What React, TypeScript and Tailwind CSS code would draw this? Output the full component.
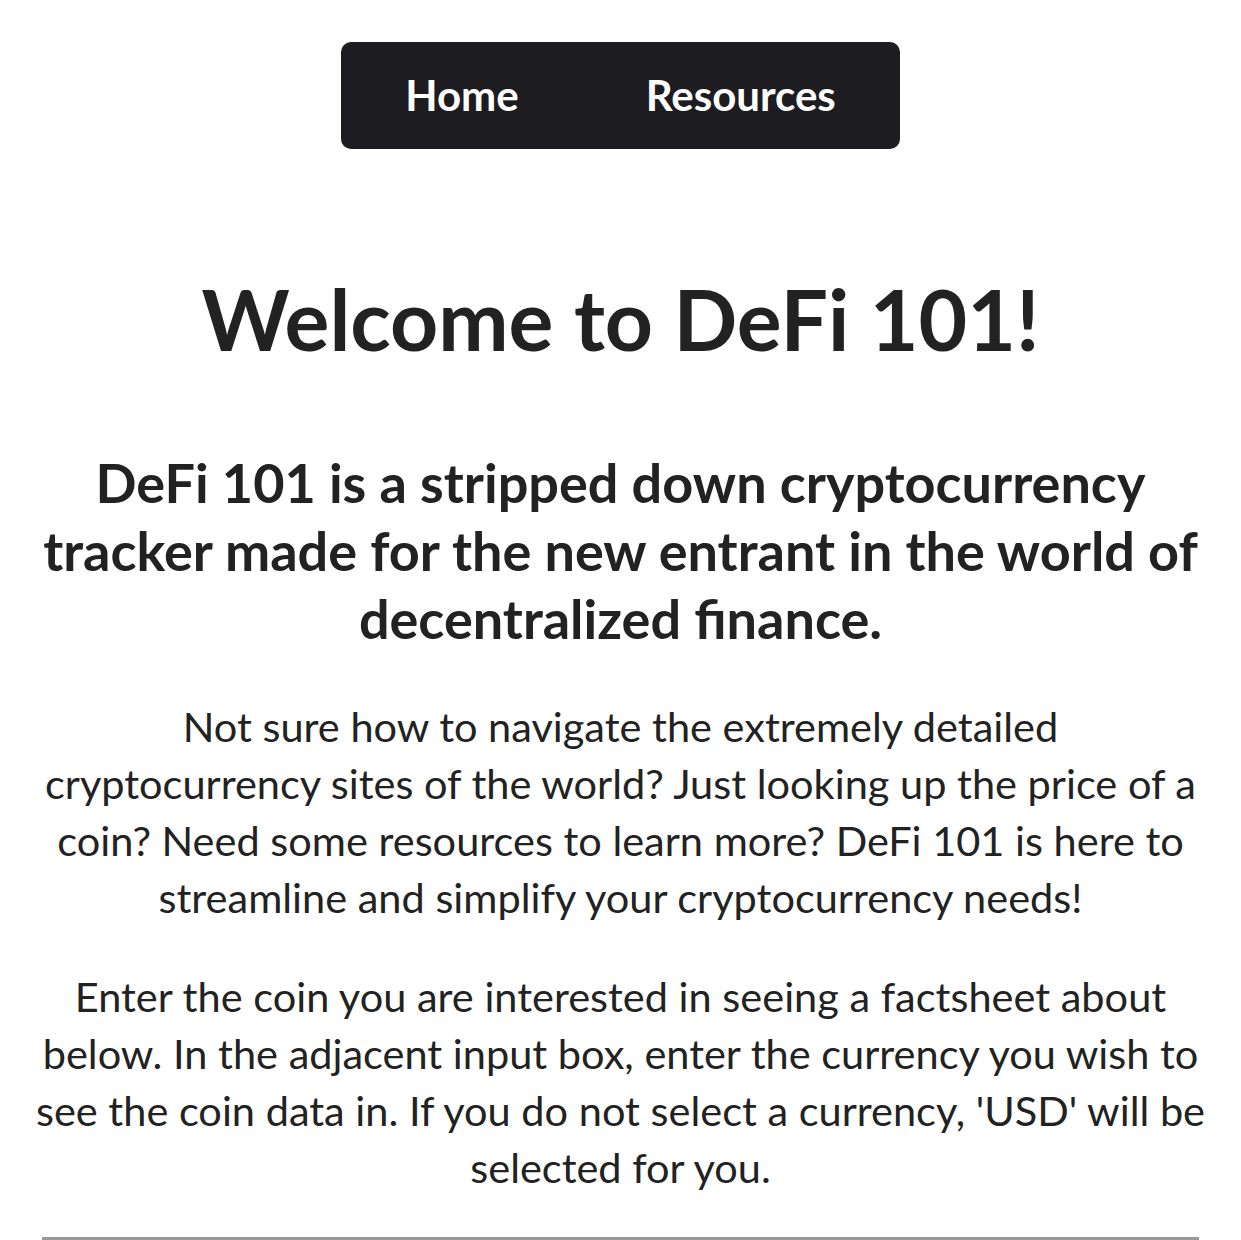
export default function App() {
  return (
    <div className="min-h-screen bg-white text-[#222222]" style={{ fontFamily: "Lato, 'Noto Sans', sans-serif" }}>
      <div className="px-[34px] pt-[42px] text-center">
        <nav className="mx-auto flex h-[107px] w-[559px] items-center justify-center gap-[127px] rounded-[10px] bg-[#1d1c21]">
          <a className="text-[42px] font-bold text-white">Home</a>
          <a className="text-[42px] font-bold text-white">Resources</a>
        </nav>
        <h1 className="mt-[120px] text-[84px] font-bold leading-[1.2]">Welcome to DeFi 101!</h1>
        <h2 className="mx-[6px] mt-[79px] text-[54px] font-bold leading-[68px]">
          DeFi 101 is a stripped down cryptocurrency tracker made for the new entrant in the world of decentralized finance.
        </h2>
        <p className="mx-[8px] mt-[45px] text-[41.5px] leading-[57px]">
          Not sure how to navigate the extremely detailed cryptocurrency sites of the world? Just looking up the price of a coin? Need some resources to learn more? DeFi 101 is here to streamline and simplify your cryptocurrency needs!
        </p>
        <p className="mt-[42px] text-[41.5px] leading-[57px]">
          Enter the coin you are interested in seeing a factsheet about below. In the adjacent input box, enter the currency you wish to see the coin data in. If you do not select a currency, 'USD' will be selected for you.
        </p>
        <hr className="mx-[8px] mt-[41px] border-t-[3px] border-[#999999]" />
      </div>
    </div>
  );
}
